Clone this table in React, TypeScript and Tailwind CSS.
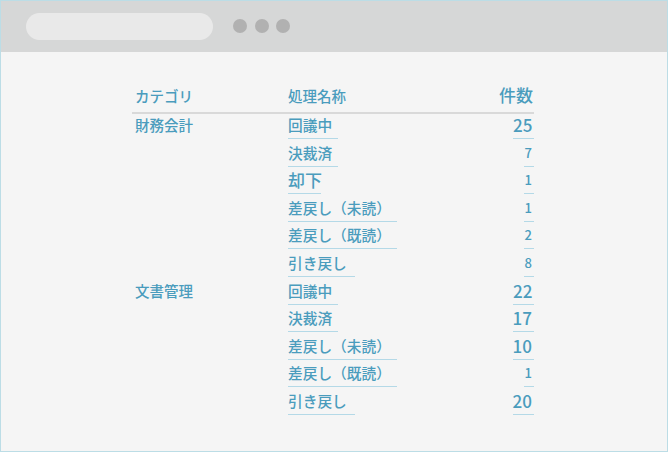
const rows = [
  { cat: "財務会計", name: "回議中", nw: 50, n: "25", cw: 21, big: true },
  { cat: "", name: "決裁済", nw: 50, n: "7", cw: 10.5 },
  { cat: "", name: "却下", nw: 33, n: "1", cw: 10.5, nameBig: true },
  { cat: "", name: "差戻し（未読）", nw: 109, n: "1", cw: 10.5 },
  { cat: "", name: "差戻し（既読）", nw: 109, n: "2", cw: 10.5 },
  { cat: "", name: "引き戻し", nw: 67, n: "8", cw: 10.5 },
  { cat: "文書管理", name: "回議中", nw: 50, n: "22", cw: 21, big: true },
  { cat: "", name: "決裁済", nw: 50, n: "17", cw: 21.5, big: true },
  { cat: "", name: "差戻し（未読）", nw: 109, n: "10", cw: 21.5, big: true },
  { cat: "", name: "差戻し（既読）", nw: 109, n: "1", cw: 10.5 },
  { cat: "", name: "引き戻し", nw: 67, n: "20", cw: 21.5, big: true },
];

export default function App() {
  return (
    <div
      className="w-[668px] h-[452px] flex flex-col border border-[#bcdde6] bg-[#f5f5f5] text-[#4a9cbd] font-medium"
      style={{ fontFamily: '"Noto Sans CJK JP", "Noto Sans", sans-serif' }}
    >
      <div className="h-[51px] shrink-0 bg-[#d6d7d7] flex items-center pl-[25px] pb-px">
        <div className="w-[187px] h-[27px] rounded-full bg-[#e9e9e9]" />
        <div className="flex gap-[7.5px] ml-[20px]">
          <span className="w-[14px] h-[14px] rounded-full bg-[#b1b1b1]" />
          <span className="w-[14px] h-[14px] rounded-full bg-[#b1b1b1]" />
          <span className="w-[14px] h-[14px] rounded-full bg-[#b1b1b1]" />
        </div>
      </div>

      <div className="ml-[131px] mt-[30px] w-[402px]">
        <div className="flex items-end h-[32px] border-b-2 border-[#d9d9d9] pb-[6px]">
          <div className="w-[156px] pl-[3px] text-[14.5px] leading-[20px]">カテゴリ</div>
          <div className="flex-1 text-[14.5px] leading-[20px]">処理名称</div>
          <div className="text-[17px] leading-[22px] pr-[1px]">件数</div>
        </div>
        {rows.map((r, i) => (
          <div key={i} className={`flex items-end ${i === 0 ? "h-[25px]" : "h-[27.6px]"}`}>
            <div className="w-[156px] pl-[3px] text-[14.5px] leading-[26px] self-end pb-px">{r.cat}</div>
            <div className="flex-1">
              <div
                className={`border-b border-[#b4d9e7] leading-[26px] whitespace-nowrap ${r.nameBig ? "text-[17px]" : "text-[14.7px]"}`}
                style={{ width: r.nw }}
              >
                {r.name}
              </div>
            </div>
            <div
              className={`border-b border-[#b4d9e7] leading-[26px] text-right pr-[2px] ${r.big ? "text-[17px]" : "text-[13px]"}`}
              style={{ width: r.cw }}
            >
              {r.n}
            </div>
          </div>
        ))}
      </div>
    </div>
  );
}
